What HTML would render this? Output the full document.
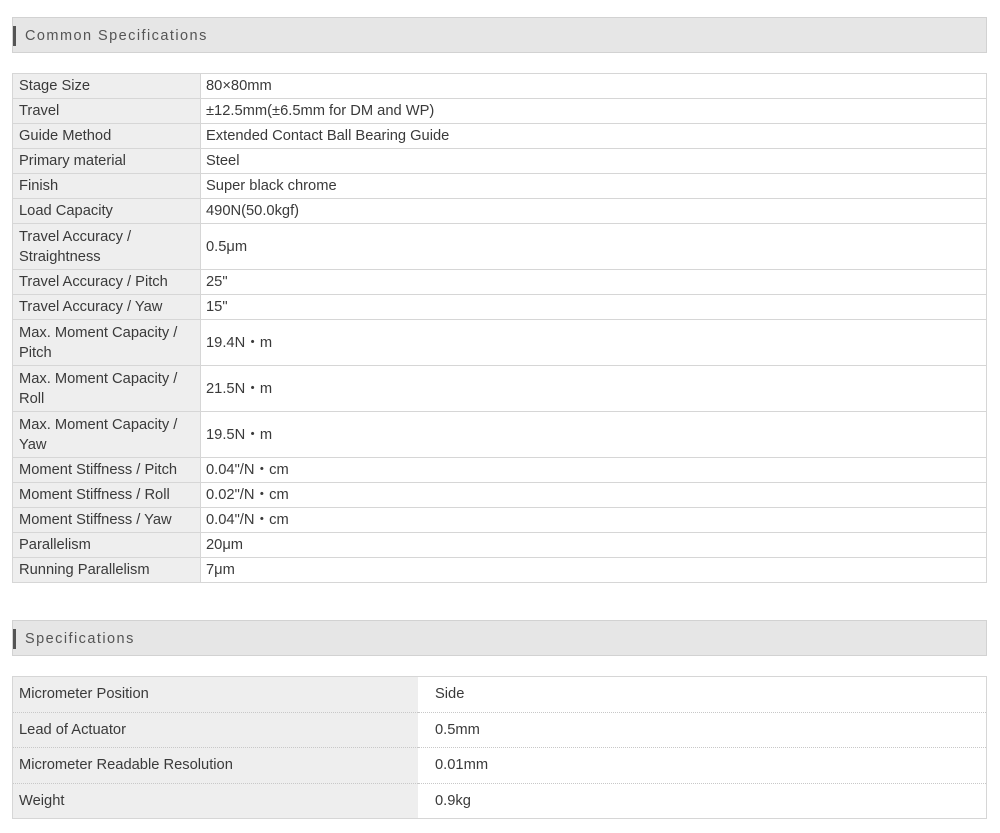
<!DOCTYPE html>
<html><head><style>
body{margin:0;background:#fff;font-family:"Liberation Sans",sans-serif;color:#3a3a3a;font-size:14.7px;}
.h{position:absolute;left:12px;width:973px;height:34px;background:#e6e6e6;border:1px solid #d2d2d2;}
.h:before{content:"";position:absolute;left:0;top:8px;width:3px;height:20px;background:#555;}
.h span{position:absolute;left:12px;top:10px;letter-spacing:1.45px;color:#555;font-size:14.5px;}
table{position:absolute;left:12px;width:975px;border-collapse:collapse;border:1px solid #d6d6d6;}
td{border-bottom:1px solid #d6d6d6;padding:0 6px;line-height:20px;vertical-align:middle;}
.t1 td{height:24px;}
.t1 td.d{height:45px;}
.t1 td:first-child{background:#eee;width:175px;border-right:1px solid #d6d6d6;}
.t1 td:last-child{padding-left:5px;}
.t2 td{height:34.5px;border-bottom:1px dotted #c8c8c8;padding-left:6px;padding-right:7px;}
.t2 td:first-child{background:#eee;width:389px;padding-right:10px;}
.t2 td:last-child{padding-left:17px;}
</style></head><body>
<div class="h" style="top:17px"><span>Common Specifications</span></div>
<table class="t1" style="top:73px">
<tr><td>Stage Size</td><td>80×80mm</td></tr>
<tr><td>Travel</td><td>±12.5mm(±6.5mm for DM and WP)</td></tr>
<tr><td>Guide Method</td><td>Extended Contact Ball Bearing Guide</td></tr>
<tr><td>Primary material</td><td>Steel</td></tr>
<tr><td>Finish</td><td>Super black chrome</td></tr>
<tr><td>Load Capacity</td><td>490N(50.0kgf)</td></tr>
<tr><td class="d">Travel Accuracy /<br>Straightness</td><td>0.5μm</td></tr>
<tr><td>Travel Accuracy / Pitch</td><td>25"</td></tr>
<tr><td>Travel Accuracy / Yaw</td><td>15"</td></tr>
<tr><td class="d">Max. Moment Capacity /<br>Pitch</td><td>19.4N・m</td></tr>
<tr><td class="d">Max. Moment Capacity /<br>Roll</td><td>21.5N・m</td></tr>
<tr><td class="d">Max. Moment Capacity /<br>Yaw</td><td>19.5N・m</td></tr>
<tr><td>Moment Stiffness / Pitch</td><td>0.04"/N・cm</td></tr>
<tr><td>Moment Stiffness / Roll</td><td>0.02"/N・cm</td></tr>
<tr><td>Moment Stiffness / Yaw</td><td>0.04"/N・cm</td></tr>
<tr><td>Parallelism</td><td>20μm</td></tr>
<tr><td>Running Parallelism</td><td>7μm</td></tr>
</table>
<div class="h" style="top:620px"><span>Specifications</span></div>
<table class="t2" style="top:676px">
<tr><td>Micrometer Position</td><td>Side</td></tr>
<tr><td>Lead of Actuator</td><td>0.5mm</td></tr>
<tr><td>Micrometer Readable Resolution</td><td>0.01mm</td></tr>
<tr><td>Weight</td><td>0.9kg</td></tr>
</table>
</body></html>
